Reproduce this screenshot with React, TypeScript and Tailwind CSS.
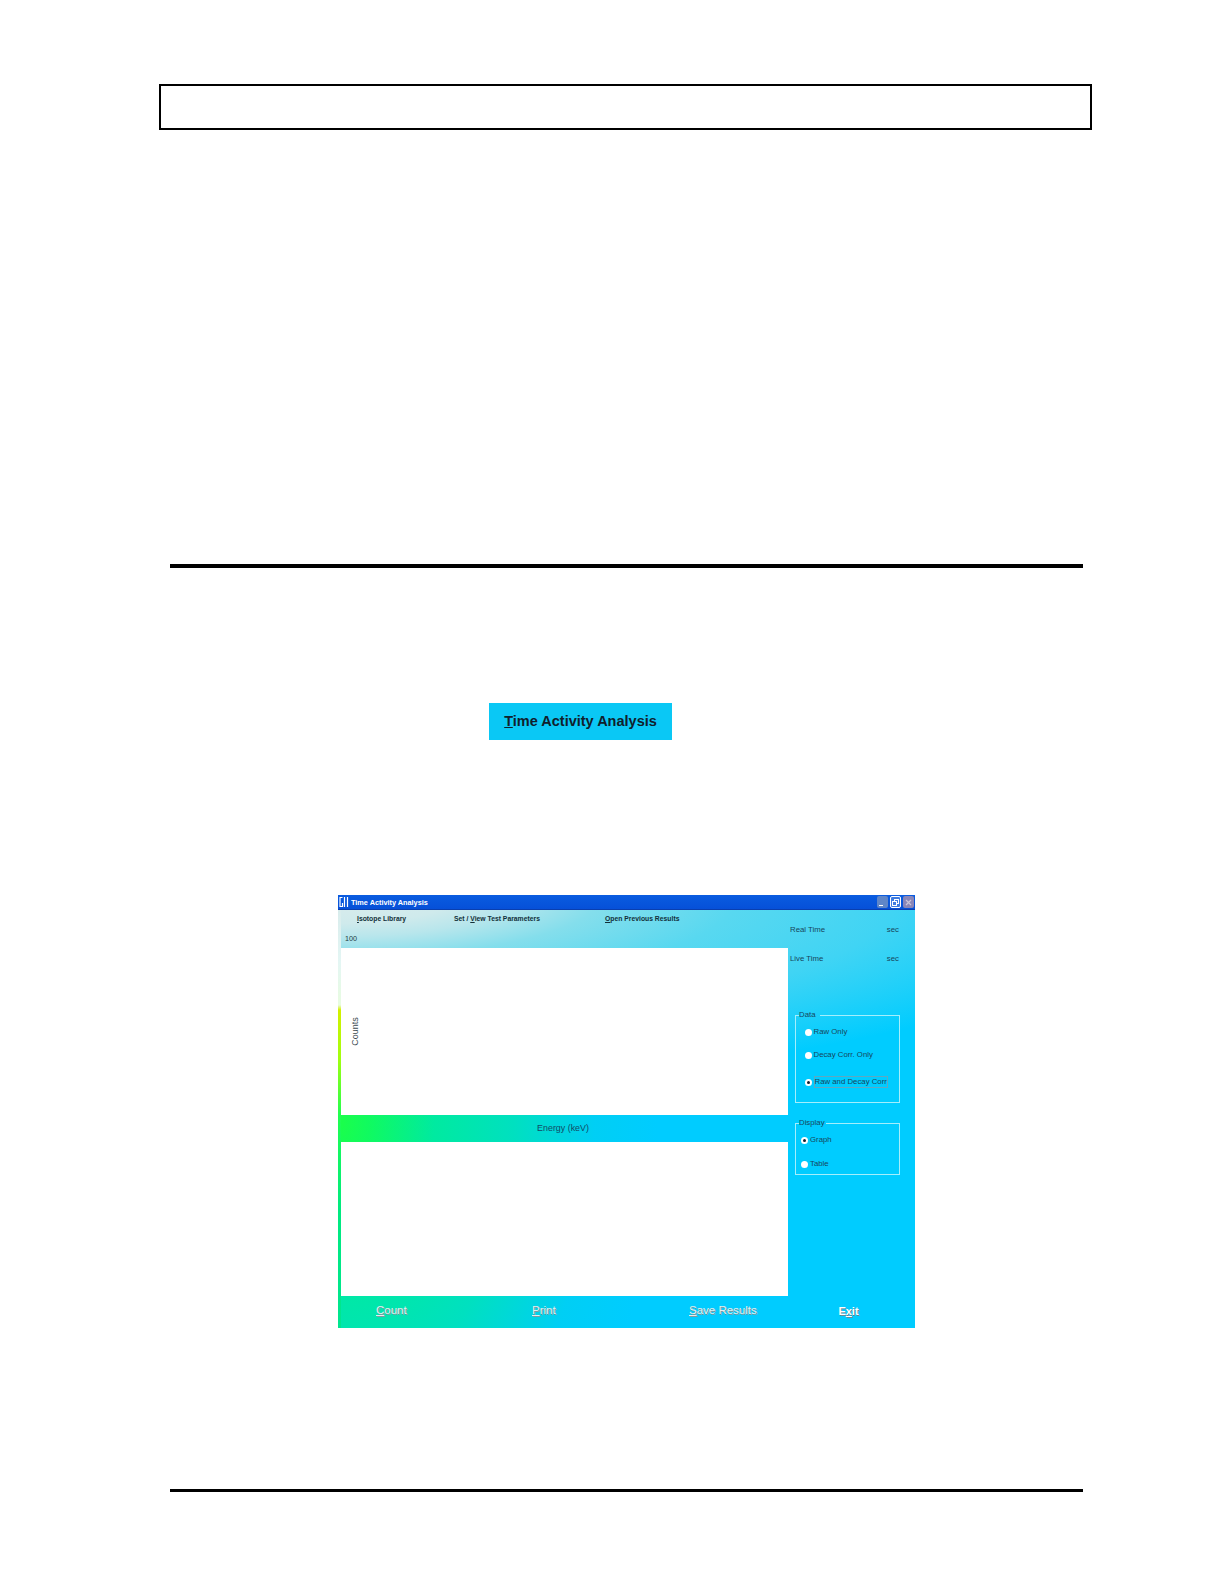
function Radio({ checked }: { checked?: boolean }) {
  return (
    <span className="flex h-[7px] w-[7px] shrink-0 items-center justify-center rounded-full bg-white">
      {checked && <span className="h-[3px] w-[3px] rounded-full bg-[#102030]" />}
    </span>
  );
}

function TitleButtons() {
  return (
    <div className="flex items-center gap-[2px] pr-[1px]">
      <span className="flex h-[12px] w-[11px] items-end rounded-[2px] bg-[#5f86c8] px-[2px] pb-[2px]">
        <span className="h-[1px] w-[4px] bg-white" />
      </span>
      <span className="flex h-[12px] w-[11px] items-center justify-center rounded-[2px] border border-white bg-[#3f7be0]">
        <svg width="7" height="7" viewBox="0 0 7 7" fill="none" stroke="white" strokeWidth="1">
          <rect x="2.5" y="0.5" width="4" height="4" />
          <rect x="0.5" y="2.5" width="4" height="4" fill="#3f7be0" />
        </svg>
      </span>
      <span className="flex h-[12px] w-[11px] items-center justify-center rounded-[2px] bg-[#8a86b8]">
        <svg width="7" height="7" viewBox="0 0 7 7" stroke="#c9c4d8" strokeWidth="1.2">
          <path d="M1 1l5 5M6 1L1 6" />
        </svg>
      </span>
    </div>
  );
}

function Window() {
  return (
    <div className="ml-[338px] mt-[155px] flex h-[433px] w-[577px] shrink-0 flex-col overflow-hidden bg-[#00ccff] bg-[radial-gradient(ellipse_800px_190px_at_0px_0px,#dcecec_0%,#cfeaec_15%,#b8e6ec_22%,#84deec_33%,#58d8f0_50%,#40d4f4_70%,rgba(0,204,255,0)_100%),radial-gradient(ellipse_320px_500px_at_0px_226px,#1cff48_0%,#10fa60_10%,#00eaa0_30%,#00e0c0_55%,rgba(0,208,240,0.7)_80%,rgba(0,204,255,0)_100%)]">
      {/* Title bar */}
      <div className="flex h-[15px] shrink-0 items-center justify-between border-b border-[#0a3fae] bg-gradient-to-b from-[#0a5ce0] to-[#0650d8]">
        <div className="flex items-center">
          <svg className="ml-[1px]" width="10" height="12" viewBox="0 0 10 12" fill="none" stroke="white" strokeWidth="1.2">
            <path d="M3.5 1.5H1v9h2.5V7M5.5 1v10M8.5 1v10" />
          </svg>
          <span className="ml-[2px] mt-[1px] text-[7.3px] font-bold leading-none text-white">Time Activity Analysis</span>
        </div>
        <TitleButtons />
      </div>

      <div className="flex min-h-0 flex-1">
        {/* Left edge of the window */}
        <div className="w-[3px] shrink-0 bg-[linear-gradient(to_bottom,#d8ecec_0px,#e4f6f4_52px,#e8fce0_95px,#d4f000_100px,#a0ff10_150px,#20ff50_205px,#00ea80_300px,#00e690_418px)]" />

        {/* Plots */}
        <div className="flex w-[447px] shrink-0 flex-col">
          <div className="flex h-[18px] items-center pl-[16px] text-[6.8px] font-bold text-[#12303a]">
            <span className="w-[97px]"><span className="underline">I</span>sotope Library</span>
            <span className="w-[151px]">Set / <span className="underline">V</span>iew Test Parameters</span>
            <span><span className="underline">O</span>pen Previous Results</span>
          </div>
          <div className="flex h-[20px] items-center pl-[4px] pt-[2px] text-[7.2px] text-[#1e3a40]">100</div>
          <div className="relative h-[167px] bg-white">
            <span className="absolute left-[0px] top-[79px] -rotate-90 text-[9px] leading-none text-[#3a4a50]">Counts</span>
          </div>
          <div className="flex h-[27px] items-center justify-center pr-[3px] text-[8.9px] text-[#124a66]">Energy (keV)</div>
          <div className="h-[154px] bg-white" />
          <div className="flex h-[32px] items-center pb-[2px] pl-[35px] text-[11.5px] text-[#e4eef0] [text-shadow:1px_1px_0_#7f9aa0]">
            <span className="w-[156px]"><span className="underline">C</span>ount</span>
            <span className="w-[157px]"><span className="underline">P</span>rint</span>
            <span><span className="underline">S</span>ave Results</span>
          </div>
        </div>

        {/* Right side controls */}
        <div className="flex min-w-0 flex-1 flex-col text-[7.8px] text-[#17465c]">
          <div className="mt-[13px] flex h-[14px] items-center justify-between pl-[2px] pr-[16px]">
            <span>Real Time</span>
            <span>sec</span>
          </div>
          <div className="mt-[15px] flex h-[14px] items-center justify-between pl-[2px] pr-[16px]">
            <span>Live Time</span>
            <span>sec</span>
          </div>

          <fieldset className="ml-[7px] mt-[43px] h-[94px] w-[105px] border border-[#a4eefc] pl-[9px]">
            <legend className="ml-[-6px] pr-[5px] leading-[12px]">Data</legend>
            <div className="mt-[6px] flex h-[10px] items-center gap-[1.5px]">
              <Radio />
              <span>Raw Only</span>
            </div>
            <div className="mt-[13px] flex h-[10px] items-center gap-[1.5px]">
              <Radio />
              <span>Decay Corr. Only</span>
            </div>
            <div className="mt-[17px] flex h-[10px] items-center gap-[1.5px]">
              <Radio checked />
              <span className="border border-[#5fa8c0] leading-[10px]">Raw and Decay Corr</span>
            </div>
          </fieldset>

          <fieldset className="ml-[7px] mt-[14px] h-[58px] w-[105px] border border-[#a4eefc] pl-[5px]">
            <legend className="ml-[-2px] pr-[1px] leading-[12px]">Display</legend>
            <div className="mt-[6px] flex h-[10px] items-center gap-[2px]">
              <Radio checked />
              <span>Graph</span>
            </div>
            <div className="mt-[14px] flex h-[10px] items-center gap-[2px]">
              <Radio />
              <span>Table</span>
            </div>
          </fieldset>

          <div className="mt-auto flex h-[32px] items-center justify-center pb-[2px] pr-[6px] text-[11px] font-bold text-white [text-shadow:1px_1px_0_#6a8a98]">
            <span>E<span className="underline">x</span>it</span>
          </div>
        </div>
      </div>
    </div>
  );
}

export default function App() {
  return (
    <div className="flex h-[1584px] w-[1224px] flex-col bg-white pt-[84px] font-['Liberation_Sans',Arial,sans-serif]">
      {/* Page header box */}
      <div className="ml-[159px] h-[46px] w-[933px] shrink-0 border-2 border-black" />
      <div className="ml-[170px] mt-[434px] h-[4px] w-[913px] shrink-0 bg-black" />

      {/* Button picture */}
      <div className="ml-[489px] mt-[135px] flex h-[37px] w-[183px] shrink-0 items-center justify-center bg-[#0ac8f5] pt-[1px] text-[14.5px] font-bold text-[#10202c]">
        <span><span className="underline">T</span>ime Activity Analysis</span>
      </div>

      <Window />

      <div className="ml-[170px] mt-[161px] h-[3px] w-[913px] shrink-0 bg-black" />
    </div>
  );
}
